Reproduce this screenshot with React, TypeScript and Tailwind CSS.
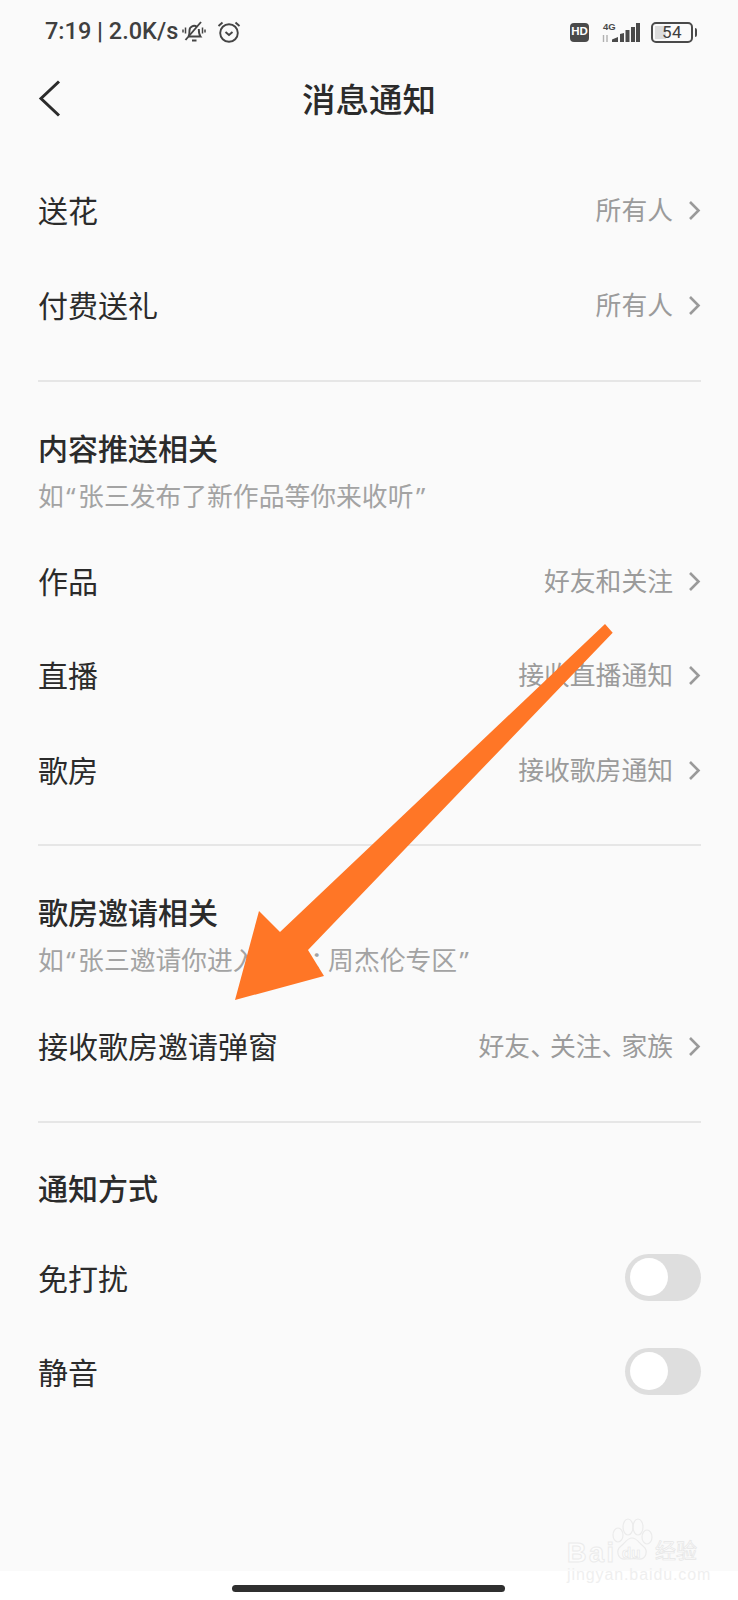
import React from "react";

const FONT = "font-['Noto_Sans','Noto_Sans_CJK_SC',sans-serif]";

function Chevron() {
  return (
    <svg width="13" height="21" viewBox="0 0 13 21" fill="none" className="ml-[15px]">
      <path d="M2 2 L10.500 10.500 L2 19" stroke="#9a9a9a" strokeWidth="2.600" />
    </svg>
  );
}

function Row({ label, value, h = "h-[95px]" }: { label: string; value: React.ReactNode; h?: string }) {
  return (
    <div className={`flex items-center justify-between ${h}`}>
      <span className="text-[30px] leading-none text-[#2b2b2b]">{label}</span>
      <span className="flex items-center text-[25.8px] leading-none text-[#9b9b9b]">
        <span>{value}</span>
        <Chevron />
      </span>
    </div>
  );
}

function Toggle() {
  return (
    <div className="flex h-[47px] w-[76px] items-center rounded-full bg-[#dedede] pl-[5px]">
      <div className="h-[38px] w-[38px] rounded-full bg-white" />
    </div>
  );
}

function ToggleRow({ label, h }: { label: string; h: string }) {
  return (
    <div className={`flex items-center justify-between ${h}`}>
      <span className="pt-[3px] text-[30px] leading-none text-[#2b2b2b]">{label}</span>
      <Toggle />
    </div>
  );
}

function Divider() {
  return <div className="h-[2px] bg-[#e6e6e6]" />;
}

function StatusBar() {
  return (
    <div className="flex h-[64px] items-center justify-between pl-[45px] pr-[45px]">
      <div className="flex items-center text-[#3f3f3f]">
        <span className="font-['Roboto',sans-serif] text-[23.5px] font-medium leading-none">
          7:19 <span className="font-bold">|</span> 2.0K/s
        </span>
        <svg width="24" height="22" viewBox="0 0 24 22" fill="none" stroke="#444444" strokeWidth="1.900" className="ml-[4px]">
          <path d="M6.500 15.500c1-1.500 1-3 1-6a4.500 4.500 0 0 1 7.500-3.500M16.800 8c0 3.500.2 5.500 1.700 7.500H6.500M10 19.500h4.500" />
          <path d="M3.500 19 19 1" />
          <path d="M3.500 6.500v6M1 8.500v3M20.500 6.500v6M23 8.500v3" strokeWidth="1.500" />
        </svg>
        <svg width="24" height="22" viewBox="0 0 24 22" fill="none" stroke="#444444" strokeWidth="1.900" className="ml-[11px]">
          <circle cx="12" cy="12" r="8.800" />
          <path d="M8.500 11l3.500 3 3.500-3" />
          <path d="M1.500 5 5.500 1.500M22.500 5 18.500 1.500" />
        </svg>
      </div>
      <div className="flex items-center">
        <div className="flex h-[19px] w-[19px] items-center justify-center rounded-[4px] bg-[#4a4a4a] font-['Liberation_Sans',sans-serif] text-[11.500px] font-bold leading-none text-white">
          HD
        </div>
        <svg width="40" height="21" viewBox="0 0 40 21" className="ml-[12px]">
          <text x="2" y="7.500" fontSize="9.500" fontWeight="700" fill="#484848" fontFamily="Liberation Sans, sans-serif">4G</text>
          <path d="M2.500 13v7M6 13v7" stroke="#b0b0b0" strokeWidth="1.400" />
          <path d="M11 20v-2.500l6-2.500v5zM19 20v-8l4-1v9zM24.500 20V8h4v12zM30 20V5h4v15zM35 20V1h4v19z" fill="#4a4a4a" />
        </svg>
        <div className="relative ml-[10px] flex h-[21px] w-[42px] items-center justify-center rounded-[5px] border-[2px] border-[#4a4a4a]">
          <div className="absolute inset-y-[2px] left-[2px] w-[11px] bg-[#dcdcdc]" />
          <span className="relative font-['Roboto',sans-serif] text-[17px] leading-none tracking-[0.5px] text-[#3f3f3f]">54</span>
          <div className="absolute right-[-6px] top-[4px] h-[9px] w-[2.500px] rounded-r-[2px] bg-[#4a4a4a]" />
        </div>
      </div>
    </div>
  );
}

function Watermark() {
  return (
    <div className="absolute left-[565px] top-[1518px] h-[64px] w-[135px] font-['Liberation_Sans',sans-serif]">
      <svg width="135" height="48" viewBox="0 0 135 48" fill="none" stroke="#ebebeb" strokeWidth="1.200" className="absolute left-0 top-0">
        <ellipse cx="53" cy="17" rx="5" ry="7" />
        <ellipse cx="63" cy="9" rx="5" ry="8" />
        <ellipse cx="73" cy="9" rx="5" ry="8" />
        <ellipse cx="82" cy="19" rx="5" ry="7" />
        <path d="M67 20c-5 0-7 5-11 8-6 5-3 14 5 13 4 0 8-1 12 0 8 1 11-8 5-13-4-3-6-8-11-8z" />
      </svg>
      <span
        className="absolute left-[2px] top-[22px] text-[27px] font-bold leading-none tracking-[2.500px] text-[#fcfcfc]"
        style={{ WebkitTextStroke: "1px #ebebeb" }}
      >
        Bai
      </span>
      <span
        className="absolute left-[57px] top-[27px] text-[15px] font-bold leading-none text-[#fcfcfc]"
        style={{ WebkitTextStroke: "0.6px #e6e6e6" }}
      >
        du
      </span>
      <span
        className="absolute left-[90px] top-[21px] font-['Noto_Sans_CJK_SC',sans-serif] text-[21px] leading-none text-[#fcfcfc]"
        style={{ WebkitTextStroke: "0.7px #e6e6e6" }}
      >
        经验
      </span>
      <span className="absolute left-[2px] top-[49px] text-[16px] leading-none tracking-[0.9px] text-[#efefef]">
        jingyan.baidu.com
      </span>
    </div>
  );
}

const Dun = () => <span className="tracking-[-6px]">、</span>;
const Q = ({ c }: { c: string }) => <span className="px-[2.500px]">{c}</span>;

export default function App() {
  return (
    <div className={`relative h-[1600px] w-[738px] overflow-hidden bg-white ${FONT}`}>
      <div className="h-[1571px] bg-[#fafafa]">
        <StatusBar />
        <div className="relative flex h-[68px] items-center justify-center">
          <svg width="24" height="38" viewBox="0 0 24 38" fill="none" className="absolute left-[38px] top-[15px]">
            <path d="M21 2.500 L3 19.500 L21 36.500" stroke="#2b2b2b" strokeWidth="3" />
          </svg>
          <span className="pt-[4px] text-[33.500px] font-medium leading-none text-[#2b2b2b]">消息通知</span>
        </div>
        <div className="flex flex-col pl-[38px] pr-[37px] pt-[31px]">
          <Row label="送花" value="所有人" />
          <Row label="付费送礼" value="所有人" />
          <div className="mt-[27px]">
            <Divider />
          </div>
          <div className="mt-[49px] text-[30px] font-medium leading-[36px] text-[#2b2b2b]">内容推送相关</div>
          <div className="mt-[14px] text-[25.800px] leading-[30px] text-[#a3a3a3]">
            如<Q c="“" />张三发布了新作品等你来收听<Q c="”" />
          </div>
          <div className="mt-[24px]">
            <Row label="作品" value="好友和关注" h="h-[94px]" />
            <Row label="直播" value="接收直播通知" h="h-[94px]" />
            <Row label="歌房" value="接收歌房通知" h="h-[95px]" />
          </div>
          <div className="mt-[26px]">
            <Divider />
          </div>
          <div className="mt-[49px] text-[30px] font-medium leading-[36px] text-[#2b2b2b]">歌房邀请相关</div>
          <div className="mt-[14px] text-[25.800px] leading-[30px] text-[#a3a3a3]">
            如<Q c="“" />张三邀请你进入歌房<span className="tracking-[-8px]">：</span>周杰伦专区<Q c="”" />
          </div>
          <div className="mt-[24px]">
            <Row
              label="接收歌房邀请弹窗"
              value={
                <>
                  好友
                  <Dun />
                  关注
                  <Dun />
                  家族
                </>
              }
            />
          </div>
          <div className="mt-[27px]">
            <Divider />
          </div>
          <div className="mt-[48px] text-[30px] font-medium leading-[36px] text-[#2b2b2b]">通知方式</div>
          <div className="mt-[23px]">
            <ToggleRow label="免打扰" h="h-[94px]" />
            <ToggleRow label="静音" h="h-[94px]" />
          </div>
        </div>
      </div>
      <div className="flex h-[29px] justify-start pl-[232px] pt-[14px]">
        <div className="h-[7px] w-[273px] rounded-full bg-[#2f2f2f]" />
      </div>
      <Watermark />
      <svg width="738" height="1600" viewBox="0 0 738 1600" className="pointer-events-none absolute left-0 top-0">
        <polygon points="605,624 612.700,632.700 308,950 324,976 235,1000 259,911 280,932" fill="#ff7626" />
      </svg>
    </div>
  );
}
